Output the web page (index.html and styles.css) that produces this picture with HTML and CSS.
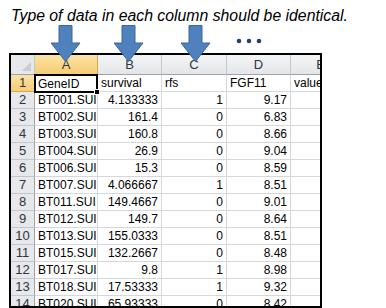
FILE: index.html
```html
<!DOCTYPE html>
<html lang="en">
<head>
  <meta charset="UTF-8">
  <title>Column data types</title>
  <link rel="stylesheet" href="styles.css">
</head>
<body>
  <p class="caption">Type of data in each column should be identical.</p>
  <div class="figure">
    <svg class="arrow arrow-a" width="31" height="37" viewBox="0 0 31 37">
      <path d="M9 0.5 H22 V18 H30 L15.5 36.5 L1 18 H9 Z" />
    </svg>
    <svg class="arrow arrow-b" width="31" height="37" viewBox="0 0 31 37">
      <path d="M9 0.5 H22 V18 H30 L15.5 36.5 L1 18 H9 Z" />
    </svg>
    <svg class="arrow arrow-c" width="31" height="37" viewBox="0 0 31 37">
      <path d="M9 0.5 H22 V18 H30 L15.5 36.5 L1 18 H9 Z" />
    </svg>
    <svg class="dots" width="26" height="6" viewBox="0 0 26 6">
      <circle cx="3" cy="3" r="2.3" />
      <circle cx="13" cy="3" r="2.3" />
      <circle cx="23" cy="3" r="2.3" />
    </svg>

    <div class="sheet">
      <div class="grid">
        <div class="hd corner"></div>
        <div class="hd active">A</div>
        <div class="hd">B</div>
        <div class="hd">C</div>
        <div class="hd">D</div>
        <div class="hd">E</div>

        <div class="rh active">1</div>
        <div class="c selected">GeneID<span class="handle"></span></div>
        <div class="c">survival</div>
        <div class="c">rfs</div>
        <div class="c">FGF11</div>
        <div class="c">value</div>

        <div class="rh">2</div>
        <div class="c">BT001.SUI</div>
        <div class="c num">4.133333</div>
        <div class="c num">1</div>
        <div class="c num">9.17</div>
        <div class="c"></div>

        <div class="rh">3</div>
        <div class="c">BT002.SUI</div>
        <div class="c num">161.4</div>
        <div class="c num">0</div>
        <div class="c num">6.83</div>
        <div class="c"></div>

        <div class="rh">4</div>
        <div class="c">BT003.SUI</div>
        <div class="c num">160.8</div>
        <div class="c num">0</div>
        <div class="c num">8.66</div>
        <div class="c"></div>

        <div class="rh">5</div>
        <div class="c">BT004.SUI</div>
        <div class="c num">26.9</div>
        <div class="c num">0</div>
        <div class="c num">9.04</div>
        <div class="c"></div>

        <div class="rh">6</div>
        <div class="c">BT006.SUI</div>
        <div class="c num">15.3</div>
        <div class="c num">0</div>
        <div class="c num">8.59</div>
        <div class="c"></div>

        <div class="rh">7</div>
        <div class="c">BT007.SUI</div>
        <div class="c num">4.066667</div>
        <div class="c num">1</div>
        <div class="c num">8.51</div>
        <div class="c"></div>

        <div class="rh">8</div>
        <div class="c">BT011.SUI</div>
        <div class="c num">149.4667</div>
        <div class="c num">0</div>
        <div class="c num">9.01</div>
        <div class="c"></div>

        <div class="rh">9</div>
        <div class="c">BT012.SUI</div>
        <div class="c num">149.7</div>
        <div class="c num">0</div>
        <div class="c num">8.64</div>
        <div class="c"></div>

        <div class="rh">10</div>
        <div class="c">BT013.SUI</div>
        <div class="c num">155.0333</div>
        <div class="c num">0</div>
        <div class="c num">8.51</div>
        <div class="c"></div>

        <div class="rh">11</div>
        <div class="c">BT015.SUI</div>
        <div class="c num">132.2667</div>
        <div class="c num">0</div>
        <div class="c num">8.48</div>
        <div class="c"></div>

        <div class="rh">12</div>
        <div class="c">BT017.SUI</div>
        <div class="c num">9.8</div>
        <div class="c num">1</div>
        <div class="c num">8.98</div>
        <div class="c"></div>

        <div class="rh">13</div>
        <div class="c">BT018.SUI</div>
        <div class="c num">17.53333</div>
        <div class="c num">1</div>
        <div class="c num">9.32</div>
        <div class="c"></div>

        <div class="rh">14</div>
        <div class="c">BT020.SUI</div>
        <div class="c num">65.93333</div>
        <div class="c num">0</div>
        <div class="c num">8.42</div>
        <div class="c"></div>
      </div>
    </div>
  </div>
</body>
</html>
```

FILE: styles.css
```css
* {
  box-sizing: border-box;
}
body {
  margin: 0;
  background: #fff;
  font-family: "Liberation Sans", Arial, sans-serif;
  color: #000;
}
.caption {
  margin: 0;
  padding: 7px 0 0 11px;
  font-size: 15.8px;
  line-height: 18px;
  font-style: italic;
  white-space: nowrap;
}
.figure {
  position: relative;
  padding-top: 28px;
}
.arrow {
  position: absolute;
  top: 0;
  z-index: 2;
}
.arrow path {
  fill: #4f81bd;
  stroke: #3b679a;
  stroke-width: 1;
}
.arrow-a {
  left: 50px;
}
.arrow-b {
  left: 113px;
}
.arrow-c {
  left: 180px;
}
.dots {
  position: absolute;
  top: 13px;
  left: 236px;
}
.dots circle {
  fill: #23406e;
}
.sheet {
  margin-left: 9px;
  width: 313px;
  height: 255px;
  border: 2px solid #000;
  overflow: hidden;
}
.grid {
  display: grid;
  grid-template-columns: 24px 63px 64px 65px 64px 60px;
  grid-template-rows: 20px;
  grid-auto-rows: 17px;
  font-size: 12px;
}
.grid > div {
  border-right: 1px solid #d4d7dc;
  border-bottom: 1px solid #d4d7dc;
  white-space: nowrap;
  overflow: hidden;
}
.grid .hd {
  background: linear-gradient(#f4f5f6, #e3e5e8);
  border-right-color: #c3c7cc;
  border-bottom-color: #9ea3aa;
  color: #2f3540;
  text-align: center;
  font-size: 13px;
  line-height: 19px;
}
.grid .corner {
  position: relative;
  background: #e6e8eb;
}
.corner::after {
  content: "";
  position: absolute;
  right: 3px;
  bottom: 3px;
  border-left: 9px solid transparent;
  border-bottom: 9px solid #c9ccd1;
}
.grid .rh {
  background: #e6e8eb;
  border-right-color: #9ea3aa;
  border-bottom-color: #c3c7cc;
  color: #2f3540;
  text-align: center;
  font-size: 13px;
  line-height: 16px;
}
.grid .active {
  background: linear-gradient(#fbe3a6, #f6cd73);
  border-bottom-color: #d6a84a;
  border-right-color: #d6a84a;
}
.grid .c {
  padding: 0 2px 0 3px;
  line-height: 16px;
}
.grid .num {
  text-align: right;
  padding-right: 3px;
}
.grid .selected {
  position: relative;
  overflow: visible;
  border: 2px solid #000;
  margin: -1px 0 -1px -1px;
  line-height: 16px;
  padding-left: 2px;
  z-index: 1;
}
.handle {
  position: absolute;
  right: -4px;
  bottom: -4px;
  width: 6px;
  height: 6px;
  background: #000;
  border: 1px solid #fff;
}
```
